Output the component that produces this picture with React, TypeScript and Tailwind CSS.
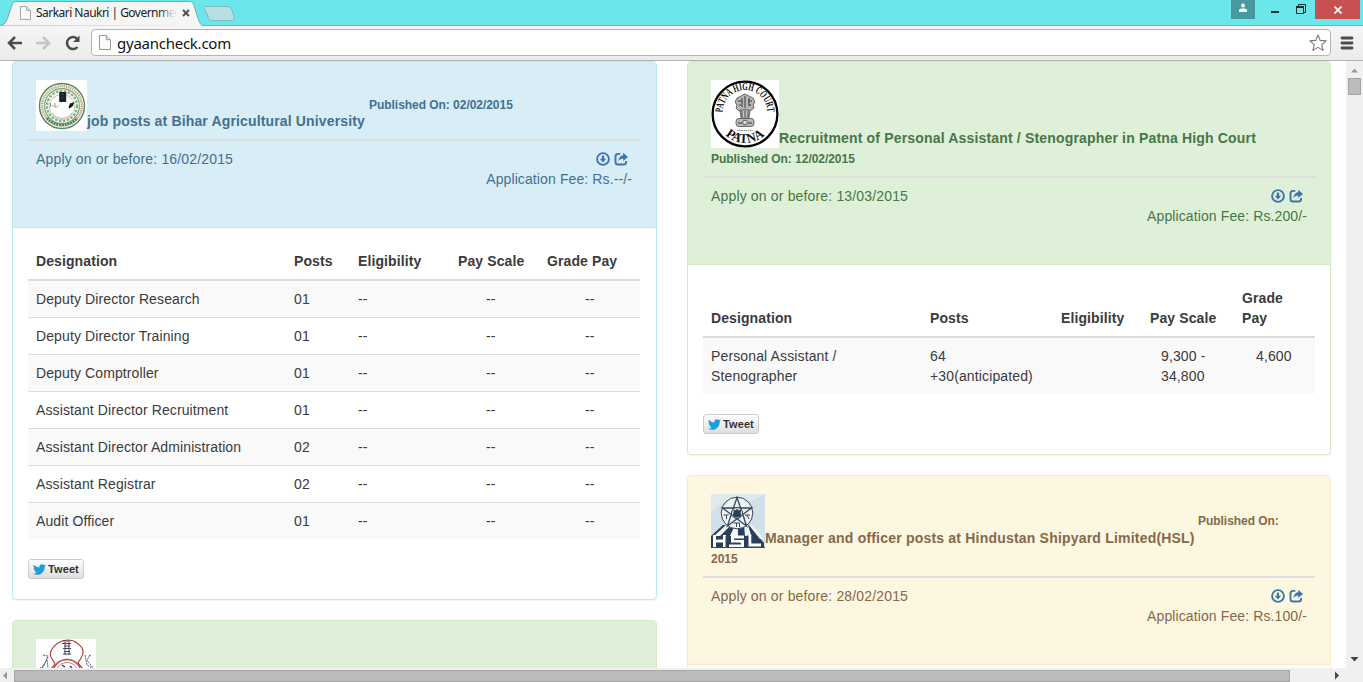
import type { ReactNode } from "react";

type Tone = "info" | "success" | "warning";

const tones: Record<Tone, { border: string; head: string }> = {
  info: { border: "border-[#bce8f1]", head: "bg-[#d9edf7] border-[#bce8f1] text-[#42718f]" },
  success: { border: "border-[#d6e9c6]", head: "bg-[#dff0d8] border-[#d6e9c6] text-[#467748]" },
  warning: { border: "border-[#faebcc]", head: "bg-[#fdf7e2] border-[#faebcc] text-[#84694a]" },
};

function PageIcon({ className }: { className: string }) {
  return (
    <svg viewBox="0 0 12 15" className={className} fill="#fbfbfb" stroke="#999" strokeWidth="1">
      <path d="M.5.5h6.8l4.2 4.2v9.8H.5z" />
      <path d="M7.3.5v4.2h4.2" fill="#e4e4e4" />
    </svg>
  );
}

function ActionIcons() {
  return (
    <svg width="32" height="14" viewBox="0 0 32 14" fill="none" stroke="#3f74a8">
      <circle cx="7" cy="7" r="5.9" strokeWidth="1.9" />
      <path d="M5.9 3.4h2.2V6.8h2.1L7 10.5 3.8 6.8h2.1z" fill="#3f74a8" stroke="none" />
      <path d="M24.3 1.9h-2.2a2.6 2.6 0 0 0-2.6 2.6v5.4a2.6 2.6 0 0 0 2.6 2.6h5.4a2.6 2.6 0 0 0 2.6-2.6V9" strokeWidth="1.9" />
      <path d="M27.2.8 32 4.9l-4.8 4V6.6c-2.2 0-3.7.9-4.8 2.9.2-3.6 1.8-6 4.8-6.3z" fill="#3f74a8" stroke="none" />
    </svg>
  );
}

function Tweet() {
  return (
    <div className="flex h-5 w-14 items-center rounded-[3px] border border-[#ccc] bg-linear-to-b from-white to-[#dedede] pl-1 text-[11px] font-bold tracking-[.1px] text-[#333]">
      <svg viewBox="0 0 24 24" className="mr-[2px] h-[13px] w-[13px] shrink-0" fill="#1b9fdc">
        <path d="M23.95 4.57a10 10 0 0 1-2.82.77 4.96 4.96 0 0 0 2.16-2.72c-.95.55-2 .96-3.13 1.18a4.92 4.92 0 0 0-8.38 4.48C7.69 8.1 4.07 6.13 1.64 3.16a4.93 4.93 0 0 0 1.52 6.57 4.9 4.9 0 0 1-2.23-.61v.06a4.92 4.92 0 0 0 3.95 4.83 5 5 0 0 1-2.21.08 4.94 4.94 0 0 0 4.6 3.42A9.87 9.87 0 0 1 0 19.54a14 14 0 0 0 7.55 2.21c9.05 0 14-7.5 14-13.99 0-.2 0-.42-.02-.63a9.94 9.94 0 0 0 2.42-2.56z" />
      </svg>
      Tweet
    </div>
  );
}

function BiharLogo() {
  return (
    <svg width="51" height="51" viewBox="0 0 51 51" className="shrink-0 bg-white" fill="none">
      <circle cx="26" cy="26" r="22.5" stroke="#4b8a5c" strokeWidth="1.4" fill="#f6f6ec" />
      <circle cx="26" cy="26" r="19.8" stroke="#c79b84" strokeWidth="2.2" strokeDasharray="1.3 .9" />
      <circle cx="26" cy="26" r="17.4" stroke="#6fa677" strokeWidth="1.1" />
      <circle cx="26" cy="26" r="15" stroke="#7fae84" strokeWidth="2.2" strokeDasharray="2.5 1.5" />
      <circle cx="26" cy="27" r="12.6" fill="#fff" stroke="#b7b6a4" strokeWidth=".8" />
      <path d="M11 38c7 9 23 9 30 0" stroke="#3f7f55" strokeWidth="2.4" strokeDasharray="2 .8" />
      <path d="M16 33c4 7 16 7 20 0" stroke="#c2b5a6" strokeWidth="1" />
      <path d="M23.2 12h7v10h-7z" fill="#18222f" />
      <path d="M25 14.5h3.4m-3.4 3h3.4" stroke="#4c5766" strokeWidth=".6" />
      <path d="m32.5 27.5 1.5-4 4.5-1.5-2 4.5-3.500 2z" fill="#161616" />
      <path d="M14.500 23v4m1.500-1h2m1-3v4h2m1-1h1" stroke="#7d7d7a" strokeWidth=".8" />
    </svg>
  );
}

function PatnaLogo() {
  return (
    <svg width="68" height="68" viewBox="0 0 68 68" className="shrink-0 bg-white" fill="none">
      <defs>
        <path id="patna-top" d="M11.500 32.500A22.500 22.500 0 0 1 56.500 32.500V40" />
        <path id="patna-bottom" d="M11 51.500A29 29 0 0 0 57 51.500" />
      </defs>
      <circle cx="34" cy="34" r="32.4" stroke="#050505" strokeWidth="2.3" />
      <g fill="#111" fontFamily="Liberation Serif, serif" fontWeight="bold">
        <text fontSize="11" textLength="70" lengthAdjust="spacingAndGlyphs">
          <textPath href="#patna-top" textLength="70" lengthAdjust="spacingAndGlyphs">PATNA HIGH COURT</textPath>
        </text>
        <text fontSize="13"><textPath href="#patna-bottom" startOffset="50%" textAnchor="middle">PATNA</textPath></text>
      </g>
      <g fill="#b5b5b5" stroke="#4a4a4a" strokeWidth=".8">
        <path d="m30 16 4-2 4 2 4 2 2 4-2 3 1 3-4 3h-3l-2-1-3 1h-3l-3-3 1-3-2-3 2-4z" />
        <path d="M29 30h10l-1 8h-8z" fill="#c9c9c9" />
        <rect x="25" y="38.500" width="18" height="8" rx="3" fill="#b9b9b9" />
      </g>
      <path d="M31 18v9m3-11v12m4-10v8M27 21h4m6 0h4M28 25h2m8 0h2M31 31v6m3-6v6m3-6v6M27 43h4m6 0h4" stroke="#3b3b3b" />
      <circle cx="34" cy="42.500" r="2.300" fill="#ddd" stroke="#444" strokeWidth=".8" />
      <path d="M26 50.500h16" stroke="#888" strokeDasharray="1.5 .7" />
    </svg>
  );
}

function ShipyardLogo() {
  return (
    <svg width="54" height="54" viewBox="0 0 54 54" className="shrink-0 bg-[#d0e1ea]" fill="none" stroke="#34485c">
      <path d="M0 0h54L37 9 12 8 0 17z" fill="#e0eaee" stroke="none" />
      <path d="M12 31h26l15 18v4H0V42z" fill="#2a3f56" stroke="none" />
      <path d="m15 31-12 11h6l11-11zm9 0-5 11h8V31zm9 0 1 11 6-1-3-10zm5 0 11 14h4L41 31z" fill="#f3f6f7" stroke="none" />
      <circle cx="26" cy="19" r="15.800" fill="#eef2f3" />
      <path d="m26 3.500 9.600 28.500L11.500 14h29L16.400 32z" strokeWidth="1.300" />
      <circle cx="26" cy="19" r="5.500" fill="#dae2e6" />
      <path d="m23 16 2 1 1-2 1 2 3-1-1 3 1 3-3 1h-3l-2-2 1-2z" fill="#2a3f56" />
      <path d="M12.500 21h5m-2 0v4m18.500-4h5m-3 0 2 4M22.500 29h6m-3 0v4m3-4v4" />
      <g stroke="#fff" strokeWidth="3">
        <path d="M3.500 41v12m10-12v12M4 47h9M33 43H21.500v4.500h10V52H18M39 41v10h11" />
      </g>
      <path d="M6 42v4m9-4v12M19 49h10M41 42v7M0 53.500h54" strokeWidth="1" />
    </svg>
  );
}

function CrestLogo() {
  return (
    <svg width="60" height="50" viewBox="0 0 60 50" className="shrink-0 bg-white" fill="none">
      <path d="M15 30l4-5-4-7c-2-5 2-11 7-14 6-4 14-4 19 0 6 4 8 9 4 15l-3 5 5 6" stroke="#b8403e" strokeWidth="1.200" />
      <path d="M17 34c1-18 27-18 28 0" stroke="#b34a49" strokeWidth="1.400" />
      <path d="M20 34c1-14 21-14 22 0" stroke="#d57b77" />
      <path d="M27 2h7M26 4.500h9M28 7h6m-7 2.500h8m-7 3h6m-7 2.500h8M29 3v13m4-13v13" stroke="#4b4750" />
      <path d="M7 16l5 1-4 10-4 2m8-11-6 11m5-8 1 8M49 16l2 10 5 3m-2-13-3 5 6 8m-4-12 2-1" stroke="#53637e" strokeDasharray="2 .7" />
      <path d="m26 26 3 2m5-1 2 2" stroke="#263d62" strokeWidth="1.400" />
    </svg>
  );
}

function Panel({ tone, head, children }: { tone: Tone; head: ReactNode; children?: ReactNode }) {
  return (
    <section className={"mb-5 rounded border bg-white shadow-[0_1px_1px_rgba(0,0,0,.05)] " + tones[tone].border}>
      <div className={"rounded-t-[3px] border-b px-[15px] pt-[18px] " + tones[tone].head}>{head}</div>
      {children}
    </section>
  );
}

function Details({ date, fee }: { date: string; fee: string }) {
  return (
    <div className="flex h-[88px] justify-between border-t-2 border-[#ddd] pt-2 pr-2 pl-2">
      <span className="tracking-[.16px]">Apply on or before: {date}</span>
      <div className="flex flex-col items-end">
        <span className="flex h-5 items-center pr-1 pb-px"><ActionIcons /></span>
        <span className="tracking-[.11px]">Application Fee: {fee}</span>
      </div>
    </div>
  );
}

const jobs = [
  ["Deputy Director Research", "01"],
  ["Deputy Director Training", "01"],
  ["Deputy Comptroller", "01"],
  ["Assistant Director Recruitment", "01"],
  ["Assistant Director Administration", "02"],
  ["Assistant Registrar", "02"],
  ["Audit Officer", "01"],
];

function Browser() {
  return (
    <header className="shrink-0">
      <div className="flex h-[25px] items-stretch bg-[#6be7ec]">
        <div className="relative flex h-[26px] w-[204px] shrink-0 items-center">
          <svg className="absolute top-0 left-0" width="204" height="26">
            <path d="M0 25.5C5 25 6 22 8 17l4-12C13 2 14 1.5 17 1.5h171c4 0 5 1 6 4l4 13c2 5 3 7 6 7.5" fill="#f5f5f5" stroke="#72adb0" />
          </svg>
          <PageIcon className="relative ml-5 h-[14px] w-[11px]" />
          <span className="relative ml-[5px] w-[139px] whitespace-nowrap font-['Noto_Sans',sans-serif] text-[12px] tracking-[-.53px] text-[#222]">
            Sarkari Naukri | Governme
            <span className="absolute top-0 right-0 h-full w-4 bg-linear-to-r from-transparent to-[#f5f5f5]" />
          </span>
          <svg className="relative ml-[7px]" width="8" height="8" stroke="#4c4c4c" strokeWidth="1.8"><path d="m1 1 6 6m0-6L1 7" /></svg>
        </div>
        <svg width="34" height="25"><path d="M1 6.5h22c3 0 4 1 5 4l2 6c1 3 0 4-2 4H9c-3 0-4-1-5-4L.5 9C0 7 0 6.500 1 6.500z" fill="#b8dfe3" stroke="#79bcc0" /></svg>
        <div className="grow" />
        <div className="flex h-[19px] w-6 justify-center bg-[#4799a0] pt-[3px]">
          <svg width="10" height="10" fill="white"><circle cx="5" cy="2.5" r="2" /><path d="M1 9V7c0-2 8-2 8 0v2z" /></svg>
        </div>
        <svg className="ml-4 shrink-0" width="44" height="19" fill="none" stroke="#182d30"><path d="M0 12h8" strokeWidth="2" /><path d="M25.500 6.500h7v7h-7zM27.500 6V4.500h7v8h-2" /><path d="M25 7h8" strokeWidth="2" /></svg>
        <div className="flex h-[19px] w-[45px] items-center justify-center bg-[#c75050]">
          <svg width="8" height="8" stroke="white" strokeWidth="1.6"><path d="m.5.5 7 7m0-7-7 7" /></svg>
        </div>
        <div className="w-[3px]" />
      </div>
      <div className="flex h-9 items-center border-t border-b border-t-[#78afb2] border-b-[#b3b3b3] bg-linear-to-b from-[#f6f6f6] to-[#ebebeb] pb-px">
        <svg className="ml-[7px]" width="80" height="18" fill="none" stroke="#4c4c4c" strokeWidth="2.5">
          <path d="M15 9H2m6-6L2 9l6 6" />
          <path d="M29 9h13m-6-6 6 6-6 6" stroke="#c4c4c4" />
          <path d="M70.5 13a6 6 0 1 1-.5-8.5" />
          <path d="M72.5 1.5V8H66z" fill="#4c4c4c" stroke="none" />
        </svg>
        <div className="ml-1 flex h-[27px] min-w-0 grow items-center rounded-sm border border-[#b5b5b5] bg-white pl-[7px]">
          <PageIcon className="h-[15px] w-3" />
          <span className="ml-[6px] grow font-['Noto_Sans',sans-serif] text-[15px] tracking-[-.25px] text-[#111]">gyaancheck.com</span>
          <svg className="mr-[3px]" width="18" height="18" viewBox="0 0 18 18" fill="#fff" stroke="#777" strokeWidth="1.1" strokeLinejoin="round"><path d="m9 1 2.2 5.4 6 .5-4.5 3.8 1.4 5.7L9 13.4l-5.1 3 1.4-5.7L.8 6.9l6-.5z" /></svg>
        </div>
        <svg className="mr-[9px] ml-[9px]" width="14" height="14" stroke="#4c4c4c" strokeWidth="2.800" strokeLinecap="round"><path d="M2 2h10M2 7h10M2 12h10" /></svg>
      </div>
    </header>
  );
}

const smallDate = "text-[12px] font-bold leading-5 tracking-[-.04px]";
const headCell = "font-bold tracking-[.1px]";

export default function App() {
  return (
    <div className="flex h-[682px] w-[1363px] flex-col overflow-hidden bg-white font-['Liberation_Sans',Arial,sans-serif] text-[14px] leading-5 text-[#3b3b3b]">
      <Browser />
      <div className="flex min-h-0 grow">
        <main className="flex min-w-0 grow overflow-hidden pl-3">
          <div className="w-[645px] shrink-0">
            <Panel
              tone="info"
              head={
                <>
                  <div className="flex h-[59px] items-start pl-2">
                    <BiharLogo />
                    <span className="mt-[31px] w-[282px] whitespace-nowrap font-bold tracking-[.15px]">job posts at Bihar Agricultural University</span>
                    <span className={smallDate + " mt-[15px]"}>Published On: 02/02/2015</span>
                  </div>
                  <div className="mr-px"><Details date="16/02/2015" fee="Rs.--/-" /></div>
                </>
              }
            >
              <div className="pt-[15px] pr-4 pb-5 pl-[15px]">
                <div className="grid grid-cols-[258px_64px_100px_89px_1fr] border-b-2 border-[#ddd] py-2 pl-2">
                  <span className={headCell}>Designation</span><span className={headCell}>Posts</span><span className={headCell}>Eligibility</span><span className={headCell}>Pay Scale</span><span className={headCell}>Grade Pay</span>
                </div>
                {jobs.map(([name, posts], i) => (
                  <div key={name} className={"grid grid-cols-[258px_64px_100px_89px_1fr] py-2 pl-2 " + (i ? "border-t border-[#ddd] " : "") + (i % 2 ? "" : "bg-[#f9f9f9]")}>
                    <span className="tracking-[.11px]">{name}</span><span className="tracking-[.1px]">{posts}</span><span className="tracking-[.2px]">--</span><span className="pl-7 tracking-[.2px]">--</span><span className="pl-[38px] tracking-[.2px]">--</span>
                  </div>
                ))}
                <div className="mt-5"><Tweet /></div>
              </div>
            </Panel>
            <Panel tone="success" head={<div className="h-[100px] pl-2"><CrestLogo /></div>} />
          </div>
          <div className="ml-[30px] w-[644px] shrink-0">
            <Panel
              tone="success"
              head={
                <>
                  <div className="h-[96px] pl-2">
                    <div className="flex h-[68px] items-end">
                      <PatnaLogo />
                      <span className="whitespace-nowrap font-bold tracking-[.17px]">Recruitment of Personal Assistant / Stenographer in Patna High Court</span>
                    </div>
                    <div className={smallDate + " pt-px"}>Published On: 12/02/2015</div>
                  </div>
                  <Details date="13/03/2015" fee="Rs.200/-" />
                </>
              }
            >
              <div className="px-[15px] pt-[15px] pb-5">
                <div className="grid grid-cols-[219px_131px_89px_92px_1fr] items-end border-b-2 border-[#ddd] py-2 pl-2">
                  <span className={headCell}>Designation</span><span className={headCell}>Posts</span><span className={headCell}>Eligibility</span><span className={headCell}>Pay Scale</span><span className={headCell}>Grade<br />Pay</span>
                </div>
                <div className="grid grid-cols-[219px_131px_89px_92px_1fr] bg-[#f9f9f9] py-2 pl-2 tracking-[.13px]">
                  <span>Personal Assistant /<br />Stenographer</span><span>64<br />+30(anticipated)</span><span /><span className="pl-[11px]">9,300 -<br />34,800</span><span className="pl-[14px]">4,600</span>
                </div>
                <div className="mt-5"><Tweet /></div>
              </div>
            </Panel>
            <Panel
              tone="warning"
              head={
                <>
                  <div className="h-[82px] pl-2">
                    <div className="flex h-[54px] items-start">
                      <ShipyardLogo />
                      <span className="mt-[34px] w-[433px] whitespace-nowrap font-bold tracking-[.2px]">Manager and officer posts at Hindustan Shipyard Limited(HSL)</span>
                      <span className={smallDate + " mt-[17px] whitespace-nowrap"}>Published On:</span>
                    </div>
                    <div className={smallDate + " pt-px"}>2015</div>
                  </div>
                  <Details date="28/02/2015" fee="Rs.100/-" />
                </>
              }
            >
              <div className="h-20" />
            </Panel>
          </div>
        </main>
        <div className="flex w-[17px] shrink-0 flex-col items-center bg-[#f0f0f0]">
          <svg className="mt-[6px]" width="9" height="6" fill="#999"><path d="m1 5.5 3.5-4 3.5 4z" /></svg>
          <div className="mt-[5px] h-[17px] w-[13px] border border-[#a5a5a5] bg-[#bcbcbc]" />
          <div className="grow" />
          <svg className="mb-[6px]" width="9" height="6" fill="#444"><path d="M.5 1h8l-4 4.5z" /></svg>
        </div>
      </div>
      <div className="flex h-[14px] shrink-0 items-center bg-[#f0f0f0]">
        <svg className="ml-[2px]" width="12" height="9" fill="#999"><path d="M5 .5v8l-4-4z" /></svg>
        <div className="mt-[2px] h-3 w-[1276px] border border-[#a8a8a8] bg-[#bcbcbc]" />
        <svg className="ml-[43px]" width="9" height="9" fill="#444"><path d="M2 .5v8l4-4z" /></svg>
      </div>
    </div>
  );
}
